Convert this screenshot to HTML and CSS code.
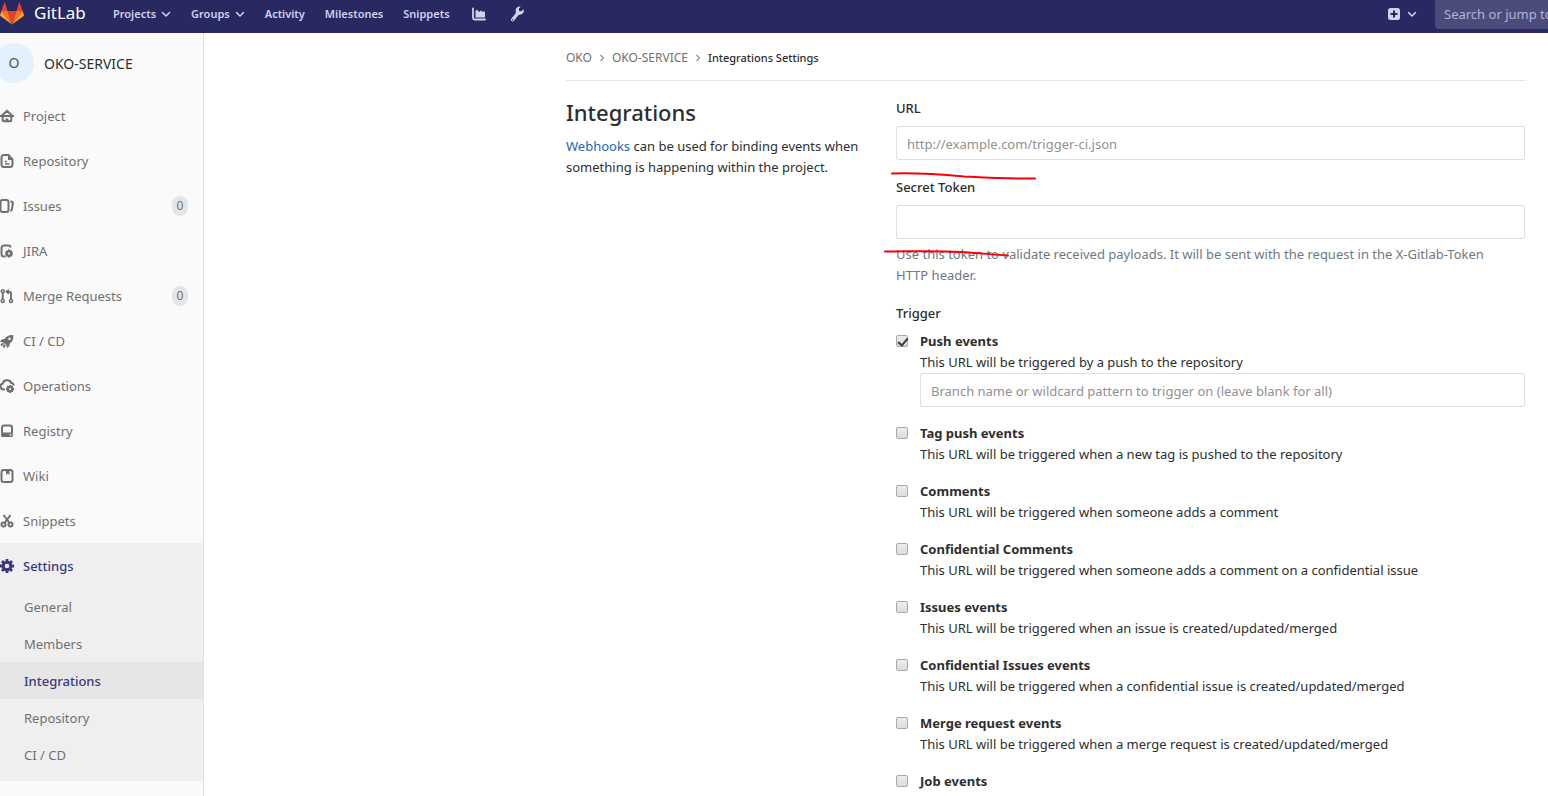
FILE: index.html
```html
<!DOCTYPE html>
<html lang="en">
<head>
<meta charset="utf-8">
<title>Integrations Settings</title>
<link rel="stylesheet" href="styles.css">
</head>
<body>
<header class="navbar">
  <a class="brand" href="#">
    <svg class="brand-logo" viewBox="0 0 24 24" aria-hidden="true">
      <path fill="#e24329" d="M12 23.500 16.400 10H7.600z"/>
      <path fill="#fc6d26" d="M12 23.500 7.600 10H1.400z"/>
      <path fill="#fca326" d="M1.400 10 .1 14.100a1 1 0 0 0 .3 1L12 23.500z"/>
      <path fill="#e24329" d="M1.400 10h6.200L5 1.800c-.1-.4-.7-.4-.8 0z"/>
      <path fill="#fc6d26" d="M12 23.500 16.400 10h6.200z"/>
      <path fill="#fca326" d="m22.600 10 1.300 4.100a1 1 0 0 1-.3 1L12 23.500z"/>
      <path fill="#e24329" d="M22.600 10h-6.200L19 1.800c.1-.4.700-.4.800 0z"/>
    </svg>
    <span class="brand-name">GitLab</span>
  </a>
  <nav class="nav-links">
    <button class="nav-item" type="button">Projects<svg class="caret" viewBox="0 0 10 10"><path d="M1.500 3.500 5 7l3.500-3.500"/></svg></button>
    <button class="nav-item" type="button">Groups<svg class="caret" viewBox="0 0 10 10"><path d="M1.500 3.500 5 7l3.500-3.500"/></svg></button>
    <a class="nav-item" href="#">Activity</a>
    <a class="nav-item" href="#">Milestones</a>
    <a class="nav-item" href="#">Snippets</a>
    <a class="nav-item" href="#" aria-label="Instance statistics"><svg class="nav-icon" viewBox="0 0 16 16"><path d="M3 2.500V12a1.500 1.500 0 0 0 1.500 1.500H15" fill="none" stroke="currentColor" stroke-width="1.800" stroke-linecap="round"/><path fill="currentColor" d="M5.500 11.500V5L7 3.500 9 6l2-1.500L12.500 6l1.500-1 1 1.500v5z"/></svg></a>
    <a class="nav-item" href="#" aria-label="Admin area"><svg class="nav-icon" viewBox="0 0 16 16"><path fill="currentColor" d="M12.600.6a4 4 0 0 0-4.700 5.200L7.500 7.400l-4.200 5.300a1.700 1.700 0 1 0 2.700 2.100l4.100-5.400 1.500-.7a4 4 0 0 0 3.900-5.500l-2.300 2.100-2-.4-.4-1.900z"/><circle cx="4.700" cy="13.700" r=".7" fill="#292961"/></svg></a>
  </nav>
  <div class="nav-right">
    <button class="nav-item" type="button" aria-label="New"><svg class="plus" viewBox="0 0 12 12"><rect width="12" height="12" rx="2.500" fill="currentColor"/><path d="M6 2.500v7M2.500 6h7" stroke="#292961" stroke-width="2"/></svg><svg class="caret" viewBox="0 0 10 10"><path d="M1.500 3.500 5 7l3.500-3.500"/></svg></button>
    <input class="search" type="text" placeholder="Search or jump to…" aria-label="Search or jump to">
  </div>
</header>

<div class="layout">
  <aside class="sidebar">
    <a class="context" href="#"><span class="avatar">O</span><span class="context-title">OKO-SERVICE</span></a>
    <ul class="menu">
      <li><a class="menu-item" href="#"><svg class="icon" viewBox="0 0 16 16"><path class="line" d="M1 8h14M2.500 8 8 2.800 13.500 8M3.700 8v4.300c0 .6.400 1 1 1h6.600c.6 0 1-.4 1-1V8"/><path class="solid" d="M6.500 10.500h3V13h-3z"/></svg>Project</a></li>
      <li><a class="menu-item" href="#"><svg class="icon" viewBox="0 0 16 16"><path class="line" d="M9.500 2H5a2.500 2.500 0 0 0-2.500 2.500v7A2.500 2.500 0 0 0 5 14h6a2.500 2.500 0 0 0 2.500-2.500V6.500z"/><path class="solid" d="M9 1.500 14 7H9z"/><path class="thin" d="M6 8.500h2M6 11h4.500"/></svg>Repository</a></li>
      <li><a class="menu-item" href="#"><svg class="icon" viewBox="0 0 16 16"><rect class="line" x="1.500" y="2" width="8" height="12" rx="2.200"/><path class="line" d="M11.500 3.300c1.900.4 2.600 1.200 2.300 2.700l-.9 5c-.2 1.200-.6 1.700-1.400 2"/></svg>Issues<span class="count">0</span></a></li>
      <li><a class="menu-item" href="#"><svg class="icon" viewBox="0 0 16 16"><path class="line" d="M6.500 13.500H5a2.500 2.500 0 0 1-2.500-2.500V5A2.500 2.500 0 0 1 5 2.500h4.500a2 2 0 0 1 2 2"/><circle class="gear-small" cx="10" cy="10.500" r="2.200"/><path class="line" d="M10 6.500v2M10 12.500v2M6 10.500h2M12 10.500h2M7.200 7.700l1.400 1.400M11.400 11.900l1.400 1.400M12.800 7.700l-1.400 1.400M8.600 11.900l-1.400 1.400"/></svg>JIRA</a></li>
      <li><a class="menu-item" href="#"><svg class="icon" viewBox="0 0 16 16"><circle class="thin" cx="3.700" cy="3.300" r="1.500"/><circle class="thin" cx="3.700" cy="12.900" r="1.500"/><circle class="thin" cx="12" cy="12.900" r="1.500"/><path class="line" d="M3.700 5v6.200M12 11.200V6a2.300 2.300 0 0 0-2.300-2.300H9"/><path class="solid" d="M9.800.8v6L6 3.800z"/></svg>Merge Requests<span class="count">0</span></a></li>
      <li><a class="menu-item" href="#"><svg class="icon" viewBox="0 0 16 16"><path class="solid" fill-rule="evenodd" d="M14.200 2c-4-.3-6.700 1-8.700 4L2.500 6.500 1 9l3 .2L7.500 12l.3 3 2.400-1.500.5-3C13.700 8.500 14.700 6 14.200 2zm-3.700 2.500a1.200 1.200 0 1 1 0 2.400 1.200 1.200 0 0 1 0-2.400z"/><path class="line" d="M4.500 10.200 2 12.500M6.200 11.800 4.500 14.500"/></svg>CI / CD</a></li>
      <li><a class="menu-item" href="#"><svg class="icon" viewBox="0 0 16 16"><path class="line" d="M6 11.500H4.800a3 3 0 0 1-1-5.900C4.200 3.300 6 2 8.500 2.300S12 4 12.200 5c1.500.2 2.400 1 2.600 2.500"/><circle class="gear-small" cx="11" cy="11" r="2.200"/><path class="line" d="M11 7v2M11 13v2M7 11h2M13 11h2M8.200 8.200l1.400 1.400M12.400 12.400l1.400 1.400M13.800 8.200l-1.400 1.400M9.600 12.400l-1.400 1.400"/></svg>Operations</a></li>
      <li><a class="menu-item" href="#"><svg class="icon" viewBox="0 0 16 16"><path class="line" d="M3 10V4.500a2 2 0 0 1 2-2h6a2 2 0 0 1 2 2V10"/><path class="solid" fill-rule="evenodd" d="M3.500 9.500h9L14 11v1.500a1.500 1.500 0 0 1-1.500 1.500h-9A1.500 1.500 0 0 1 2 12.500V11zm7 1.800v1.200h2v-1.200z"/></svg>Registry</a></li>
      <li><a class="menu-item" href="#"><svg class="icon" viewBox="0 0 16 16"><rect class="line" x="2.500" y="2" width="11" height="12" rx="2.200"/><path class="solid" d="M7 2h3.500v5L8.700 5.500 7 7z"/></svg>Wiki</a></li>
      <li><a class="menu-item" href="#"><svg class="icon" viewBox="0 0 16 16"><path class="line" d="m4.500 2 6 8M11.500 2l-6 8"/><circle class="line" cx="4.500" cy="11.600" r="2"/><circle class="line" cx="11.500" cy="11.600" r="2"/></svg>Snippets</a></li>
      <li class="menu-group">
        <a class="menu-item menu-item-current" href="#"><svg class="icon" viewBox="0 0 16 16"><circle class="gear" cx="8" cy="8" r="3.800"/><path class="teeth" d="M8 1v3M8 12v3M1 8h3M12 8h3M3 3l2.200 2.200M10.800 10.800 13 13M13 3l-2.200 2.200M5.200 10.800 3 13"/></svg>Settings</a>
        <ul class="submenu">
          <li><a class="submenu-item" href="#">General</a></li>
          <li><a class="submenu-item" href="#">Members</a></li>
          <li><a class="submenu-item submenu-item-current" href="#">Integrations</a></li>
          <li><a class="submenu-item" href="#">Repository</a></li>
          <li><a class="submenu-item" href="#">CI / CD</a></li>
        </ul>
      </li>
    </ul>
  </aside>

  <main class="content">
    <nav class="breadcrumbs" aria-label="Breadcrumb">
      <a href="#">OKO</a>
      <svg class="separator" viewBox="0 0 8 8"><path d="m2.500 1 3 3-3 3"/></svg>
      <a href="#">OKO-SERVICE</a>
      <svg class="separator" viewBox="0 0 8 8"><path d="m2.500 1 3 3-3 3"/></svg>
      <span class="breadcrumb-current">Integrations Settings</span>
    </nav>
    <div class="columns">
      <section>
        <h1 class="title">Integrations</h1>
        <p class="text"><a class="link" href="#">Webhooks</a> can be used for binding events when something is happening within the project.</p>
      </section>
      <form class="hook-form">
        <svg class="marks" viewBox="0 0 160 100" aria-hidden="true"><path d="M11 10.500c25-1 50 1 72 3 20 1 45 2.500 71 2"/><path d="M4 88.500c28 0 50-1 75 .5 20 1 30 2.500 48 3.500"/></svg>
        <div class="field">
          <label class="label" for="url">URL</label>
          <input class="input" id="url" type="text" placeholder="http://example.com/trigger-ci.json">
        </div>
        <div class="field">
          <label class="label" for="token">Secret Token</label>
          <input class="input" id="token" type="text">
          <p class="help">Use this token to validate received payloads. It will be sent with the request in the X-Gitlab-Token HTTP header.</p>
        </div>
        <fieldset class="triggers">
          <legend class="label">Trigger</legend>
          <div class="trigger">
            <input class="check" id="push" type="checkbox" checked>
            <div class="trigger-body">
              <label class="trigger-name" for="push">Push events</label>
              <p class="text">This URL will be triggered by a push to the repository</p>
              <input class="input" type="text" aria-label="Branch filter" placeholder="Branch name or wildcard pattern to trigger on (leave blank for all)">
            </div>
          </div>
          <div class="trigger">
            <input class="check" id="tag" type="checkbox">
            <div class="trigger-body"><label class="trigger-name" for="tag">Tag push events</label><p class="text">This URL will be triggered when a new tag is pushed to the repository</p></div>
          </div>
          <div class="trigger">
            <input class="check" id="comments" type="checkbox">
            <div class="trigger-body"><label class="trigger-name" for="comments">Comments</label><p class="text">This URL will be triggered when someone adds a comment</p></div>
          </div>
          <div class="trigger">
            <input class="check" id="conf-comments" type="checkbox">
            <div class="trigger-body"><label class="trigger-name" for="conf-comments">Confidential Comments</label><p class="text">This URL will be triggered when someone adds a comment on a confidential issue</p></div>
          </div>
          <div class="trigger">
            <input class="check" id="issues" type="checkbox">
            <div class="trigger-body"><label class="trigger-name" for="issues">Issues events</label><p class="text">This URL will be triggered when an issue is created/updated/merged</p></div>
          </div>
          <div class="trigger">
            <input class="check" id="conf-issues" type="checkbox">
            <div class="trigger-body"><label class="trigger-name" for="conf-issues">Confidential Issues events</label><p class="text">This URL will be triggered when a confidential issue is created/updated/merged</p></div>
          </div>
          <div class="trigger">
            <input class="check" id="merge" type="checkbox">
            <div class="trigger-body"><label class="trigger-name" for="merge">Merge request events</label><p class="text">This URL will be triggered when a merge request is created/updated/merged</p></div>
          </div>
          <div class="trigger">
            <input class="check" id="job" type="checkbox">
            <div class="trigger-body"><label class="trigger-name" for="job">Job events</label></div>
          </div>
        </fieldset>
      </form>
    </div>
  </main>
</div>
</body>
</html>
```
FILE: styles.css
```css
* { box-sizing: border-box; }
html, body { height: 100%; }
body {
  margin: 0;
  display: flex;
  flex-direction: column;
  overflow: hidden;
  font: 13px/21px "Noto Sans", sans-serif;
  color: #2e2e2e;
  background: #fff;
}
a { color: inherit; text-decoration: none; }
ul { list-style: none; margin: 0; padding: 0; }
p { margin: 0; }
input, button { font: inherit; }

.navbar {
  flex: none;
  display: flex;
  height: 33px;
  padding-bottom: 4px;
  background: #292961;
  color: #d1d1f0;
}
.brand { display: flex; align-items: center; gap: 10px; width: 113px; color: #fff; }
.brand-logo { width: 24px; height: 24px; margin-top: -4px; }
.brand-name { font-size: 17px; line-height: 24px; margin-top: -3px; }
.nav-links { display: flex; gap: 20px; }
.nav-item {
  display: flex;
  align-items: center;
  gap: 5px;
  padding: 0 0 2px;
  border: 0;
  background: none;
  color: inherit;
  font-size: 11px;
  font-weight: 600;
}
.nav-icon { width: 16px; height: 16px; margin-right: 2px; }
.caret { width: 10px; height: 10px; }
.caret path { fill: none; stroke: currentColor; stroke-width: 1.500; stroke-linecap: round; stroke-linejoin: round; }
.nav-right { display: flex; margin-left: auto; gap: 18px; }
.nav-right .nav-item { gap: 7px; }
.plus { width: 12px; height: 12px; }
.search {
  width: 113px;
  padding: 0 0 0 9px;
  border: 0;
  border-radius: 0 0 0 4px;
  background: #4c4c7c;
  color: #d1d1f0;
}
.search::placeholder { color: #b3b3da; opacity: 1; }

.layout { flex: 1; display: flex; min-height: 0; }
.sidebar {
  flex: none;
  width: 204px;
  overflow: hidden;
  background: #fafafa;
  border-right: 1px solid #e1e1e1;
  color: #707070;
}
.context { display: flex; align-items: center; gap: 10px; height: 60px; color: #2e2e2e; font-size: 14px; }
.avatar {
  width: 40px;
  height: 40px;
  margin-left: -6px;
  border-radius: 50%;
  background: #e3f1fd;
  color: #555;
  line-height: 40px;
  text-align: center;
}
.menu-item { display: flex; align-items: center; gap: 8px; height: 45px; padding: 1px 15px 0 0; }
.icon { width: 16px; height: 16px; margin-left: -1px; }
.line { fill: none; stroke: currentColor; stroke-width: 2; }
.thin { fill: none; stroke: currentColor; stroke-width: 1.500; }
.solid { fill: currentColor; }
.gear { fill: none; stroke: currentColor; stroke-width: 3; }
.gear-small { fill: none; stroke: currentColor; stroke-width: 2.200; }
.teeth { fill: none; stroke: currentColor; stroke-width: 2.800; }
.count {
  width: 16px;
  margin-left: auto;
  border-radius: 8px;
  background: #e5e5e5;
  font-size: 12px;
  line-height: 20px;
  text-align: center;
}
.menu-group { padding-bottom: 8px; background: #efefef; }
.menu-item-current { color: #393982; font-weight: 500; }
.submenu-item { display: block; padding: 9px 0 7px 24px; }
.submenu-item-current { background: #e6e6e6; color: #393982; font-weight: 500; }

.content { flex: 1; max-width: 982px; margin-left: auto; padding-right: 23px; }
.breadcrumbs {
  display: flex;
  align-items: center;
  gap: 6px;
  padding: 14px 0 12px;
  border-bottom: 1px solid #e5e5e5;
  color: #707070;
  font-size: 12px;
}
.separator { width: 8px; height: 8px; }
.separator path { fill: none; stroke: #919191; stroke-width: 1.200; }
.breadcrumb-current { color: #2e2e2e; font-size: 11px; font-weight: 500; }
.columns { display: grid; grid-template-columns: 300px 1fr; gap: 30px; padding-top: 17px; }
.title { margin: 0 0 10px; font-size: 22px; line-height: 28px; font-weight: 500; }
.link { color: #1b69b6; }
.hook-form { position: relative; }
.marks { position: absolute; left: -15px; top: 65px; width: 160px; height: 100px; pointer-events: none; }
.marks path { fill: none; stroke: #f8000c; stroke-width: 2; stroke-linecap: round; }
.field { margin-bottom: 17px; }
.label { display: block; margin-bottom: 7px; padding: 0; font-weight: 500; }
.input {
  display: block;
  width: 100%;
  height: 34px;
  padding: 2px 10px 0;
  border: 1px solid #dfdfdf;
  border-radius: 2px;
  background: #fff;
  color: #2e2e2e;
}
.input::placeholder { color: #919191; opacity: 1; }
.help { max-width: 620px; margin-top: 5px; color: #707880; }
.triggers { min-width: 0; margin: 0; padding: 0; border: 0; }
.trigger { display: flex; gap: 12px; margin-bottom: 16px; }
.trigger-body { flex: 1; }
.trigger-name { display: block; font-weight: 700; }
.check {
  flex: none;
  width: 12px;
  height: 12px;
  margin: 4px 0 0;
  appearance: none;
  border: 1px solid #a9a9a9;
  border-radius: 2px;
  background: linear-gradient(#ededed, #dcdcdc);
}
.check:checked::before {
  content: "";
  display: block;
  width: 8px;
  height: 4px;
  margin: 2px 1px;
  border: solid #3c3c3c;
  border-width: 0 0 2px 2px;
  transform: rotate(-50deg);
}
```
